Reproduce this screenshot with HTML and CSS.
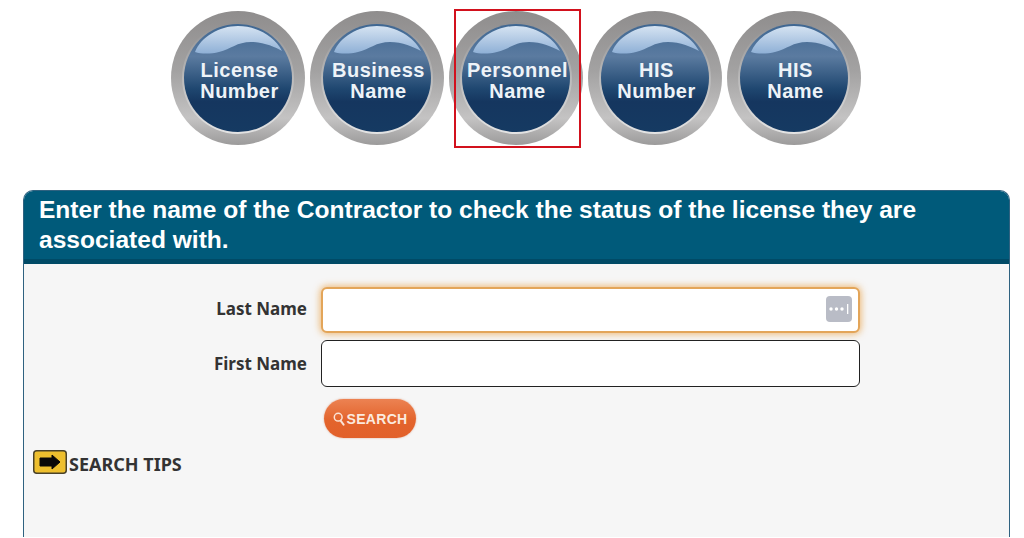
FILE: index.html
```html
<!DOCTYPE html>
<html lang="en">
<head>
<meta charset="UTF-8">
<title>License Search</title>
<link rel="stylesheet" href="styles.css">
</head>
<body>
<svg class="defs" width="0" height="0">
    <defs>
        <linearGradient id="ringGrad" x1="0" y1="0" x2="0" y2="1">
            <stop offset="0" stop-color="#8f8d8d"/>
            <stop offset="0.45" stop-color="#a3a2a2"/>
            <stop offset="0.8" stop-color="#c4c3c3"/>
            <stop offset="1" stop-color="#9c9b9b"/>
        </linearGradient>
        <linearGradient id="innerRing" x1="0" y1="0" x2="0" y2="1">
            <stop offset="0" stop-color="#908f90"/>
            <stop offset="1" stop-color="#e4e4e4"/>
        </linearGradient>
        <linearGradient id="ballGrad" x1="0" y1="0" x2="0" y2="1">
            <stop offset="0" stop-color="#3f6792"/>
            <stop offset="0.3" stop-color="#5b7ba0"/>
            <stop offset="0.6" stop-color="#1f4770"/>
            <stop offset="0.72" stop-color="#15365f"/>
            <stop offset="1" stop-color="#153a62"/>
        </linearGradient>
        <linearGradient id="shine" x1="0" y1="0" x2="0" y2="1">
            <stop offset="0" stop-color="#d5e3f2"/>
            <stop offset="1" stop-color="#8fb0d6"/>
        </linearGradient>
        <symbol id="badge" viewBox="0 0 134 134">
            <circle cx="67" cy="67" r="67" fill="url(#ringGrad)"/>
            <circle cx="67" cy="67" r="56" fill="url(#innerRing)"/>
            <circle cx="67" cy="67" r="54" fill="url(#ballGrad)"/>
            <path d="M24 41 C30 26 48 15 67 15 C86 15 104 26 111 40 C104 36 92 31 80 31 C66 31 60 38 48 41 C40 43 30 43 24 41 Z" fill="url(#shine)"/>
        </symbol>
    </defs>
</svg>

<nav class="search-types">
    <a class="badge"><svg class="badge-bg"><use href="#badge"/></svg><span>License<br>Number</span></a>
    <a class="badge"><svg class="badge-bg"><use href="#badge"/></svg><span>Business<br>Name</span></a>
    <a class="badge selected"><svg class="badge-bg"><use href="#badge"/></svg><span>Personnel<br>Name</span></a>
    <a class="badge"><svg class="badge-bg"><use href="#badge"/></svg><span>HIS<br>Number</span></a>
    <a class="badge"><svg class="badge-bg"><use href="#badge"/></svg><span>HIS<br>Name</span></a>
</nav>

<section class="panel">
    <h1 class="panel-title">Enter the name of the Contractor to check the status of the license they are associated with.</h1>
    <div class="panel-body">
        <form class="search-form">
            <label class="field-label label-top" for="lastName">Last Name</label>
            <div class="input-wrap">
                <input class="field-input focused" type="text" id="lastName">
                <svg class="autofill-icon" viewBox="0 0 26 26">
                    <rect width="26" height="26" rx="4" fill="#b9bcc6"/>
                    <circle cx="5" cy="13" r="1.7" fill="#fff"/>
                    <circle cx="10.5" cy="13" r="1.7" fill="#fff"/>
                    <circle cx="16" cy="13" r="1.7" fill="#fff"/>
                    <rect x="21" y="8" width="1.3" height="10" fill="#fff"/>
                </svg>
            </div>
            <label class="field-label" for="firstName">First Name</label>
            <div class="input-wrap">
                <input class="field-input" type="text" id="firstName">
            </div>
            <div class="form-actions">
                <button class="search-btn" type="button">
                    <svg class="search-icon" viewBox="0 0 12 14">
                        <circle cx="5.2" cy="5.2" r="3.9" fill="none" stroke="#fbe3d6" stroke-width="1.5"/>
                        <path d="M7.6 8.6 L10.6 12.6" stroke="#fbe3d6" stroke-width="2" stroke-linecap="round"/>
                    </svg>SEARCH
                </button>
            </div>
        </form>
        <div class="tips">
            <svg class="tips-icon" viewBox="0 0 34 24">
                <rect x="0.75" y="0.75" width="32.5" height="22.5" rx="3" fill="#eebf2e" stroke="#4a4228" stroke-width="1.5"/>
                <path d="M7 8 H19 V5 L27 12 L19 19 V16 H7 Z" fill="#0a0808" stroke="#0a0808" stroke-linejoin="round"/>
            </svg>
            <span class="tips-text">SEARCH TIPS</span>
        </div>
    </div>
</section>
</body>
</html>
```

FILE: styles.css
```css
html, body {
    margin: 0;
    height: 538px;
    overflow: hidden;
    background-color: #fff;
}
.defs {
    display: block;
    height: 0;
}

/* round buttons on top */
.search-types {
    display: flex;
    justify-content: center;
    gap: 5px;
    padding-top: 11px;
    padding-left: 7px;
}
.badge {
    position: relative;
    display: flex;
    align-items: center;
    justify-content: center;
    width: 134px;
    height: 134px;
    color: #eef3f8;
    font-family: "Liberation Sans", Arial, sans-serif;
    font-weight: 700;
    font-size: 20px;
    letter-spacing: 0.5px;
    line-height: 21px;
    text-align: center;
}
.badge span {
    position: relative;
    top: 3px;
    left: 2px;
}
.badge-bg {
    position: absolute;
    left: 0;
    top: 0;
    width: 134px;
    height: 134px;
}
.selected::after {
    content: "";
    position: absolute;
    left: 5px;
    top: -2px;
    width: 123px;
    height: 135px;
    border: 2px solid #d2111d;
}

.panel {
    margin: 45px 14px 0 23px;
    border: 1px solid #2f6280;
    border-bottom: 0;
    border-radius: 10px 10px 0 0;
    background-color: #f6f6f6;
}
.panel-title {
    margin: 0;
    padding: 4px 15px 4px;
    font-family: "Liberation Sans", Arial, sans-serif;
    font-size: 24.55px;
    line-height: 30px;
    font-weight: 700;
    color: #fff;
    background-color: #005a7a;
    border-bottom: 5px solid #004a66;
    border-radius: 9px 9px 0 0;
}
.panel-body {
    height: 250px;
    padding: 23px 9px 0;
}

.search-form {
    display: grid;
    grid-template-columns: 274px 539px;
    column-gap: 14px;
    row-gap: 7px;
    align-items: center;
}
.field-label {
    font-family: "Noto Sans", sans-serif;
    font-weight: 700;
    font-size: 17px;
    color: #333;
    text-align: right;
}
.label-top {
    padding-bottom: 3px;
}
.input-wrap {
    position: relative;
    display: flex;
}
.field-input {
    box-sizing: border-box;
    width: 539px;
    height: 47px;
    border: 1px solid #222;
    border-radius: 6px;
    background-color: #fff;
    outline: none;
}
.focused {
    height: 46px;
    border: 2px solid #e3a559;
    box-shadow: 0 0 7px 1px rgba(232, 160, 70, 0.75);
}
.autofill-icon {
    position: absolute;
    right: 8px;
    top: 9px;
    width: 26px;
    height: 26px;
}
.form-actions {
    grid-column: 2;
    padding-top: 5px;
    padding-left: 3px;
}
.search-btn {
    display: flex;
    align-items: center;
    justify-content: center;
    gap: 2px;
    width: 92px;
    height: 39px;
    padding: 0;
    border: 0;
    border-radius: 20px;
    background: linear-gradient(#ec8252, #e3642c 55%, #e2602a);
    color: #fbeadf;
    font-family: "Liberation Sans", Arial, sans-serif;
    font-weight: 700;
    font-size: 14px;
    letter-spacing: 0.3px;
    box-shadow: 0 0 2px rgba(200, 90, 40, 0.5);
}
.search-icon {
    width: 12px;
    height: 14px;
}

.tips {
    display: flex;
    align-items: center;
    gap: 2px;
    margin-top: 10px;
    font-family: "Noto Sans", sans-serif;
    font-weight: 700;
    font-size: 18px;
    color: #333;
}
.tips-text {
    padding-top: 4px;
}
.tips-icon {
    width: 34px;
    height: 24px;
}
```
